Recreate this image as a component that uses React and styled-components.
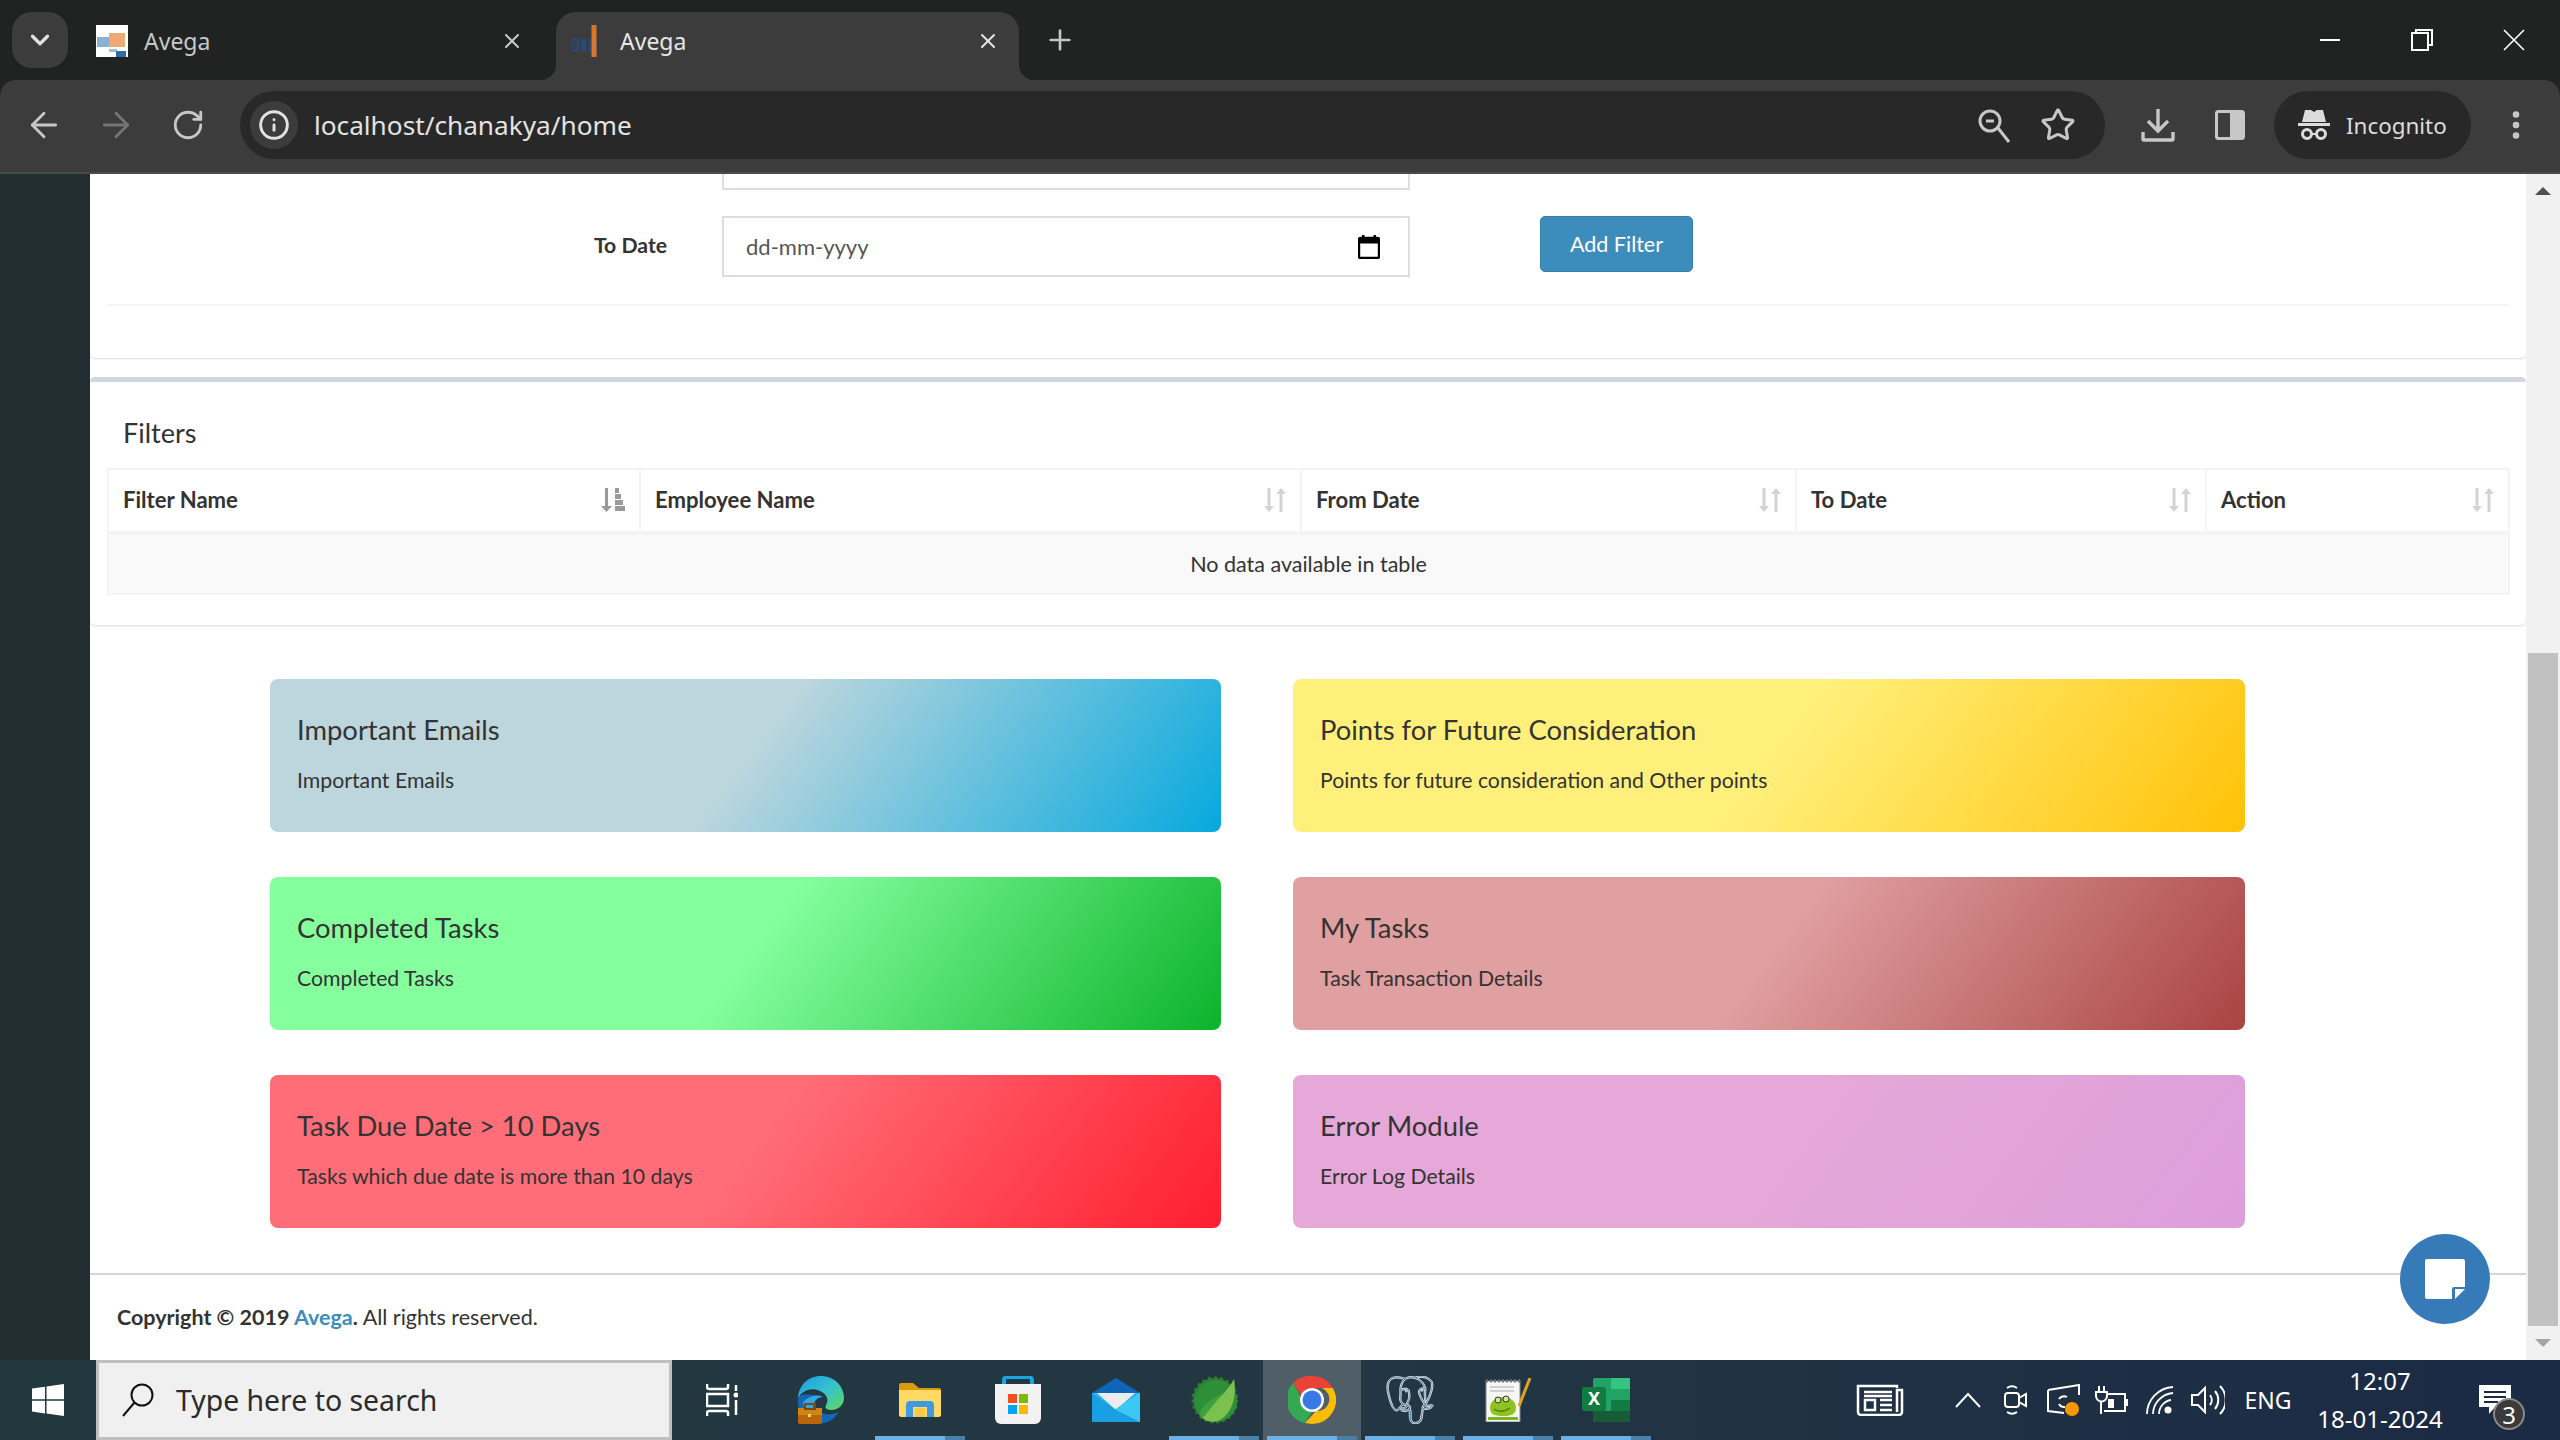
import React from "react";
import styled, { createGlobalStyle } from "styled-components";
import { ArrowLeft, ArrowRight, RotateCw, Info, Star, ChevronDown, Plus, X, EllipsisVertical } from "lucide-react";
import { SiPostgresql } from "react-icons/si";

const GlobalStyle = createGlobalStyle`
  html, body {
    margin: 0;
    width: 2560px;
    height: 1440px;
    overflow: hidden;
    background: #fff;
    font-family: "Lato", "Noto Sans", sans-serif;
    color: #333;
  }
  * { box-sizing: border-box; }
`;

const Screen = styled.div`
  display: flex;
  flex-direction: column;
  width: 2560px;
  height: 1440px;
`;

/* browser chrome */
const BrowserTop = styled.div`
  background: #202322;
  font-family: "Noto Sans", sans-serif;
`;

const TabStrip = styled.div`
  display: flex;
  align-items: flex-start;
  height: 80px;
  padding-top: 12px;
`;

const TabSearch = styled.button`
  display: flex;
  align-items: center;
  justify-content: center;
  width: 56px;
  height: 56px;
  margin: 0 12px;
  padding: 0;
  border: 0;
  border-radius: 20px;
  background: #3c3c3c;
  color: #e3e3e3;
`;

const Tab = styled.div`
  position: relative;
  display: flex;
  align-items: center;
  gap: 16px;
  width: 463px;
  height: 68px;
  margin-right: ${(p) => (p.$active ? 0 : 13)}px;
  padding: 0 19px 11px 16px;
  border-radius: 20px 20px 0 0;
  background: ${(p) => (p.$active ? "#3c3c3c" : "transparent")};
  color: ${(p) => (p.$active ? "#e6e6e6" : "#c7c7c7")};
  font-size: 23px;

  ${(p) =>
    p.$active &&
    `
    &::before, &::after {
      content: "";
      position: absolute;
      bottom: 0;
      width: 16px;
      height: 16px;
    }
    &::before { left: -16px; background: radial-gradient(circle at 0 0, transparent 16px, #3c3c3c 16.5px); }
    &::after { right: -16px; background: radial-gradient(circle at 100% 0, transparent 16px, #3c3c3c 16.5px); }
  `}
`;

const TabTitle = styled.span`
  flex: 1;
  line-height: 32px;
`;

const NewTab = styled.div`
  display: flex;
  align-items: center;
  justify-content: center;
  width: 56px;
  height: 56px;
  margin-left: 13px;
  color: #c7c7c7;
`;

const WindowControls = styled.div`
  display: flex;
  margin: -12px 0 0 auto;
`;

const WindowButton = styled.div`
  display: flex;
  align-items: center;
  justify-content: center;
  width: 92px;
  height: 80px;
`;

const Toolbar = styled.div`
  display: flex;
  align-items: center;
  height: 94px;
  padding: 0 0 2px 8px;
  border-bottom: 2px solid #4a4a4a;
  border-radius: 16px 16px 0 0;
  background: #3c3c3c;
`;

const ToolSlot = styled.div`
  display: flex;
  flex: none;
  align-items: center;
  justify-content: center;
  width: ${(p) => p.$w || 72}px;
  height: 68px;
  color: ${(p) => p.$color || "#c7c7c7"};
`;

const Omnibox = styled.div`
  display: flex;
  align-items: center;
  width: 1865px;
  height: 68px;
  margin: 0 17px 0 16px;
  padding: 0 15px 0 10px;
  border-radius: 34px;
  background: #282828;
`;

const SiteChip = styled.div`
  display: flex;
  align-items: center;
  justify-content: center;
  width: 48px;
  height: 48px;
  margin-right: 16px;
  border-radius: 50%;
  background: #3c3c3c;
  color: #e3e3e3;
`;

const UrlText = styled.span`
  flex: 1;
  color: #e3e3e3;
  font-size: 26.2px;
`;

const IncognitoChip = styled.div`
  display: flex;
  align-items: center;
  gap: 16px;
  width: 197px;
  height: 68px;
  margin: 0 9px 0 8px;
  padding-left: 24px;
  border-radius: 34px;
  background: #282828;
  color: #dcdcdc;
  font-size: 22.4px;
`;

/* page */
const Viewport = styled.div`
  position: relative;
  display: flex;
  flex: 1;
  min-height: 0;
`;

const Sidebar = styled.div`
  flex: none;
  width: 90px;
  background: #222d32;
`;

const Content = styled.div`
  display: flex;
  flex: 1;
  flex-direction: column;
  min-width: 0;
  background: #fff;
`;

const FilterBox = styled.div`
  padding-bottom: 52px;
  border-radius: 0 0 5px 5px;
  box-shadow: 0 1px 2px rgba(0, 0, 0, 0.14);
`;

const ClippedField = styled.div`
  width: 688px;
  height: 16px;
  margin-left: 632px;
  border: 2px solid #dadde4;
  border-top: 0;
`;

const FormRow = styled.div`
  display: flex;
  align-items: flex-start;
  margin-top: 26px;
`;

const FieldLabel = styled.label`
  width: 577px;
  margin-right: 55px;
  font-size: 21.2px;
  font-weight: 700;
  line-height: 58px;
  text-align: right;
`;

const DateField = styled.div`
  display: flex;
  align-items: center;
  justify-content: space-between;
  width: 688px;
  height: 61px;
  padding: 0 28px 0 22px;
  border: 2px solid #dadde4;
  color: #555;
  font-size: 22px;
`;

const AddButton = styled.button`
  width: 153px;
  height: 56px;
  margin-left: 130px;
  border: 1px solid #367fa9;
  border-radius: 5px;
  background: #3c8dbc;
  color: #fff;
  font-family: inherit;
  font-size: 21.5px;
`;

const Divider = styled.div`
  height: 2px;
  margin: 27px 17px 0 18px;
  background: #f4f4f4;
`;

const FiltersBox = styled.div`
  margin-top: 19px;
  padding-bottom: 30px;
  border-top: 5px solid #d2d6de;
  border-radius: 5px;
  box-shadow: 0 1px 2px rgba(0, 0, 0, 0.14);
`;

const BoxTitle = styled.h3`
  margin: 0;
  padding: 33px 0 17px 33px;
  font-size: 27px;
  font-weight: 400;
  line-height: 36px;
`;

const TableWrap = styled.div`
  margin: 0 18px 0 17px;
`;

const Table = styled.table`
  width: 100%;
  border-collapse: collapse;
  table-layout: fixed;
`;

const HeadCell = styled.th`
  width: ${(p) => p.$w}px;
  height: 64px;
  padding: 0 14px 2px 14px;
  border: 2px solid #f4f4f4;
  border-bottom-width: 4px;
  font-size: 22.1px;
  font-weight: 700;
  text-align: left;
`;

const HeadInner = styled.div`
  display: flex;
  align-items: center;
  justify-content: space-between;
`;

const EmptyCell = styled.td`
  height: 61px;
  border: 2px solid #f4f4f4;
  background: #f9f9f9;
  font-size: 21.5px;
  text-align: center;
`;

const CardGrid = styled.div`
  display: grid;
  grid-template-columns: 951px 952px;
  gap: 45px 72px;
  margin: 54px 0 0 180px;
`;

const Card = styled.div`
  height: 153px;
  padding: 31px 27px 0;
  border-radius: 8px;
  background: linear-gradient(127deg, ${(p) => p.$from} 50%, ${(p) => p.$to} 100%);
`;

const CardTitle = styled.div`
  font-size: 27.4px;
  line-height: 40px;
`;

const CardText = styled.div`
  margin-top: 15px;
  font-size: 21.25px;
  line-height: 30px;
`;

const Footer = styled.footer`
  flex: 1;
  margin-top: 45px;
  padding: 26px 0 0 27px;
  border-top: 2px solid #d2d6de;
  font-size: 21.5px;
  line-height: 32px;
`;

const FooterLink = styled.span`
  color: #3c8dbc;
`;

const Scrollbar = styled.div`
  display: flex;
  flex: none;
  flex-direction: column;
  width: 34px;
  background: #f1f1f1;
`;

const ScrollArrow = styled.div`
  display: flex;
  flex: none;
  align-items: center;
  justify-content: center;
  height: 34px;
  &::after {
    content: "";
    border-left: 8px solid transparent;
    border-right: 8px solid transparent;
    ${(p) => (p.$down ? "border-top: 8px solid #a3a3a3;" : "border-bottom: 8px solid #505050;")}
  }
`;

const ScrollThumb = styled.div`
  flex: none;
  height: 673px;
  margin: auto 2px 0;
  background: #c1c1c1;
`;

const NoteButton = styled.div`
  position: absolute;
  right: 70px;
  bottom: 36px;
  display: flex;
  align-items: center;
  justify-content: center;
  width: 90px;
  height: 90px;
  border-radius: 50%;
  background: #367ab8;
`;

/* taskbar */
const Taskbar = styled.div`
  display: flex;
  flex: none;
  align-items: stretch;
  height: 80px;
  background: linear-gradient(90deg, #21383f 0%, #233743 50%, #1b2a45 100%);
  color: #fff;
  font-family: "Noto Sans", sans-serif;
`;

const StartButton = styled.div`
  display: flex;
  flex: none;
  align-items: center;
  justify-content: center;
  width: 96px;
`;

const SearchBox = styled.div`
  display: flex;
  flex: none;
  align-items: center;
  gap: 21px;
  width: 576px;
  padding-left: 22px;
  border: 3px solid #c0c0c0;
  background: #f0f0f0;
  color: #2b2b2b;
  font-size: 28.4px;
`;

const AppSlot = styled.div`
  position: relative;
  display: flex;
  flex: none;
  align-items: center;
  justify-content: center;
  width: ${(p) => p.$w || 98}px;
  background: ${(p) => (p.$current ? "#4f5e67" : "transparent")};

  ${(p) =>
    p.$open &&
    `
    &::after {
      content: "";
      position: absolute;
      left: 4px;
      right: 4px;
      bottom: 0;
      height: 4px;
      background: linear-gradient(90deg, #6cb1e6 78%, #4a7fa8 78%);
    }
  `}
`;

const Tray = styled.div`
  display: flex;
  align-items: center;
  margin-left: auto;
`;

const TraySlot = styled.div`
  display: flex;
  flex: none;
  align-items: center;
  justify-content: center;
  width: ${(p) => p.$w || 48}px;
  height: 80px;
  font-size: 23px;
`;

const Clock = styled.div`
  width: 152px;
  font-size: 24px;
  line-height: 38px;
  text-align: center;
`;

const NoticeSlot = styled.div`
  position: relative;
  display: flex;
  align-items: center;
  width: 104px;
  height: 80px;
  padding-left: 23px;
`;

const NoticeBadge = styled.span`
  position: absolute;
  left: 37px;
  top: 38px;
  display: flex;
  align-items: center;
  justify-content: center;
  width: 32px;
  height: 32px;
  border: 2px solid #8a8a8a;
  border-radius: 50%;
  background: #3a3a3a;
  font-size: 24px;
`;

/* drawings */
const FaviconOne = () => (
  <svg width="32" height="32" viewBox="0 0 32 32">
    <rect width="32" height="32" fill="#fff" />
    <rect x="1" y="12" width="12" height="10" fill="#6f9bcb" opacity="0.8" />
    <rect x="13" y="8" width="16" height="14" fill="#f0a875" />
    <rect x="13" y="24" width="8" height="3" fill="#9bbcdb" />
    <rect x="20" y="26" width="10" height="6" fill="#2f6da8" />
  </svg>
);

const FaviconTwo = () => (
  <svg width="32" height="32" viewBox="0 0 32 32">
    <rect x="0" y="14" width="6" height="12" rx="3" fill="none" stroke="#274a86" strokeWidth="2" />
    <rect x="9" y="14" width="5" height="12" fill="#274a86" />
    <rect x="18" y="14" width="6" height="12" fill="none" stroke="#274a86" strokeWidth="2" />
    <path d="M22 0v32" stroke="#d9762b" strokeWidth="5" />
  </svg>
);

const ZoomOutIcon = () => (
  <svg width="36" height="36" viewBox="0 0 36 36" fill="none" stroke="currentColor" strokeWidth="3">
    <circle cx="14" cy="14" r="10" />
    <path d="M22 21l11 14" />
    <path d="M10 14h8" />
  </svg>
);

const DownloadIcon = () => (
  <svg width="34" height="34" viewBox="0 0 34 34" fill="none" stroke="currentColor" strokeWidth="3.4">
    <path d="M17 1v21M7 13l10 10 10-10" />
    <path d="M2 24v7a1 1 0 0 0 1 1h28a1 1 0 0 0 1-1v-7" />
  </svg>
);

const SidePanelIcon = () => (
  <svg width="30" height="30" viewBox="0 0 30 30">
    <rect x="1.5" y="1.5" width="27" height="27" rx="2" fill="none" stroke="currentColor" strokeWidth="3" />
    <rect x="15" y="1.5" width="13" height="27" fill="currentColor" />
  </svg>
);

const IncognitoIcon = () => (
  <svg width="32" height="30" viewBox="0 0 32 30" fill="currentColor">
    <path d="M7 0h6l3 2 3-2h6l3 12H4z" />
    <rect x="0" y="13" width="32" height="3" />
    <circle cx="9" cy="24" r="4.5" fill="none" stroke="currentColor" strokeWidth="3" />
    <circle cx="23" cy="24" r="4.5" fill="none" stroke="currentColor" strokeWidth="3" />
    <rect x="13" y="23" width="6" height="2" />
  </svg>
);

const CalendarIcon = () => (
  <svg width="22" height="24" viewBox="0 0 22 24">
    <rect x="4" y="0" width="2.5" height="4" fill="#000" />
    <rect x="15.500" y="0" width="2.500" height="4" fill="#000" />
    <rect x="1" y="3" width="20" height="20" rx="1.500" fill="none" stroke="#000" strokeWidth="2.400" />
    <rect x="1" y="3" width="20" height="5.500" fill="#000" />
  </svg>
);

const SortIcon = () => (
  <svg width="22" height="24" viewBox="0 0 22 24" fill="#d3d3d3">
    <path d="M3.500 0h3v18h3.500l-5 6-5-6h3.500z" />
    <path d="M15.500 24h3V6H22l-5-6-5 6h3.500z" />
  </svg>
);

const SortAscIcon = () => (
  <svg width="24" height="24" viewBox="0 0 24 24" fill="#9a9a9a">
    <path d="M4 0h3v18h4l-5.500 6L0 18h4z" />
    <rect x="14" y="0" width="4" height="5" />
    <rect x="14" y="6" width="6" height="5" />
    <rect x="14" y="12" width="8" height="5" />
    <rect x="14" y="18" width="10" height="5" />
  </svg>
);

const NoteIcon = () => (
  <svg width="40" height="40" viewBox="0 0 40 40">
    <path d="M2 0h36a2 2 0 0 1 2 2v26H29a2 2 0 0 0-2 2v10H2a2 2 0 0 1-2-2V2a2 2 0 0 1 2-2z" fill="#fff" />
    <path d="M30 30h10L30 40z" fill="#fff" />
  </svg>
);

const WindowsLogo = () => (
  <svg width="32" height="32" viewBox="0 0 32 32" fill="#fff">
    <path d="M0 4.500l13-1.800v12.600H0zM14.500 2.500L32 0v15.300H14.500zM0 16.800h13v12.600L0 27.500zM14.500 16.800H32V32l-17.500-2.500z" />
  </svg>
);

const SearchGlass = () => (
  <svg width="34" height="34" viewBox="0 0 34 34" fill="none" stroke="#111" strokeWidth="2">
    <circle cx="21" cy="12" r="10.500" />
    <path d="M13.500 19.500L2 33" />
  </svg>
);

const TaskViewIcon = () => (
  <svg width="32" height="32" viewBox="0 0 32 32" fill="none" stroke="#fff" strokeWidth="2.500">
    <path d="M1 0v3a2 2 0 0 0 2 2h17a2 2 0 0 0 2-2V0" />
    <rect x="1" y="10" width="21" height="12" />
    <path d="M1 32v-3a2 2 0 0 1 2-2h17a2 2 0 0 1 2 2v3" />
    <path d="M30 1v6M30 16v15" />
    <circle cx="30" cy="11" r="2.500" fill="#fff" stroke="none" />
  </svg>
);

const EdgeIcon = () => (
  <svg width="48" height="48" viewBox="0 0 48 48">
    <defs>
      <linearGradient id="edgeTop" x1="0" y1="0" x2="1" y2="1">
        <stop offset="0" stopColor="#1b9de2" />
        <stop offset="0.5" stopColor="#35c1d0" />
        <stop offset="1" stopColor="#5fd85d" />
      </linearGradient>
    </defs>
    <path d="M24 0C10 0 2 10 1 22c5-8 14-11 22-7 7 3 9 9 6 14-2 4 2 5 6 5 6 0 12-5 12-12C47 10 37 0 24 0z" fill="url(#edgeTop)" />
    <path d="M1 22c-1 8 2 16 9 21 8 6 20 6 27-1 3-3 4-5 4-6-5 3-14 4-20-2-4-4-4-10 0-14-8-2-16-3-20 2z" fill="#1468b3" />
    <path d="M6 26c6-6 14-8 20-5-5 0-10 4-10 10 0 3 0 5 1 7-6-2-11-6-11-12z" fill="#35a6e4" />
    <rect x="1" y="32" width="24" height="16" rx="2" fill="#b8660c" />
    <rect x="1" y="32" width="24" height="7" fill="#cf8413" />
    <rect x="8" y="28" width="10" height="5" fill="none" stroke="#7a4a0a" strokeWidth="2" />
    <rect x="11" y="38" width="3" height="3" fill="#ffd24a" />
  </svg>
);

const FolderIcon = () => (
  <svg width="42" height="34" viewBox="0 0 42 34">
    <path d="M0 2a2 2 0 0 1 2-2h12l6 5h20a2 2 0 0 1 2 2v3H0z" fill="#d99a0c" />
    <path d="M0 7h42v25a2 2 0 0 1-2 2H2a2 2 0 0 1-2-2z" fill="#ffd966" />
    <path d="M7 34V22a4 4 0 0 1 4-4h20a4 4 0 0 1 4 4v12h-7v-10H14v10z" fill="#3f9be0" />
    <rect x="16" y="25" width="10" height="9" fill="#f7c948" />
  </svg>
);

const StoreIcon = () => (
  <svg width="46" height="48" viewBox="0 0 46 48">
    <path d="M9 10V4a3 3 0 0 1 3-3h22a3 3 0 0 1 3 3v6" fill="none" stroke="#19a6e0" strokeWidth="4" />
    <path d="M0 8h46v34a6 6 0 0 1-6 6H6a6 6 0 0 1-6-6z" fill="#f2f2f2" />
    <rect x="13" y="18" width="9" height="9" fill="#f25022" />
    <rect x="24" y="18" width="9" height="9" fill="#7fba00" />
    <rect x="13" y="29" width="9" height="9" fill="#00a4ef" />
    <rect x="24" y="29" width="9" height="9" fill="#ffb900" />
  </svg>
);

const MailIcon = () => (
  <svg width="48" height="44" viewBox="0 0 48 44">
    <path d="M0 15L24 0l24 15v4H0z" fill="#0f66b8" />
    <path d="M0 15h48v29H0z" fill="#2fb4ee" />
    <path d="M5 15h38L24 32z" fill="#ececec" />
    <path d="M48 15v29H24l-2-12z" fill="#3cc8f5" />
    <path d="M0 15v29h48L24 32z" fill="#1a9fe3" />
  </svg>
);

const SpringIcon = () => (
  <svg width="48" height="48" viewBox="0 0 48 48">
    <circle cx="25" cy="24" r="22" fill="#2e7d32" stroke="#2e7d32" strokeWidth="3" strokeDasharray="3 3" />
    <circle cx="26" cy="25" r="21" fill="#2f8f38" />
    <path d="M44 3c3 18-2 34-14 41-6 3-14 2-19-3 4-2 8-10 14-16 6-5 14-12 19-22z" fill="#7cc04f" />
    <path d="M9 38c4-10 14-16 26-22-8 8-14 16-22 26z" fill="#3fa13b" />
  </svg>
);

const ChromeIcon = () => (
  <svg width="48" height="48" viewBox="0 0 48 48">
    <path d="M24 0a24 24 0 0 1 20.800 12H24a12 12 0 0 0-11 7L5 7A24 24 0 0 1 24 0z" fill="#ea4335" />
    <path d="M5 7l8 14a12 12 0 0 0 11 15l-7 11A24 24 0 0 1 5 7z" fill="#34a853" />
    <path d="M44.800 12A24 24 0 0 1 24 48l-7-1 11-12a12 12 0 0 0 6-23z" fill="#fbbc04" />
    <circle cx="24" cy="24" r="12" fill="#fff" />
    <circle cx="24" cy="24" r="9.500" fill="#3b78e7" />
  </svg>
);

const NotepadIcon = () => (
  <svg width="46" height="44" viewBox="0 0 46 44">
    <rect x="1" y="3" width="34" height="41" fill="#f6f6f6" stroke="#888" strokeWidth="1" />
    <path d="M1 3h34" stroke="#777" strokeWidth="3" strokeDasharray="2 2" />
    <path d="M5 9h24M5 13h24" stroke="#aaa" strokeWidth="1.200" />
    <path d="M5 30c0-7 6-11 13-11s13 4 13 11-6 8-13 8-13-1-13-8z" fill="#8fc31f" />
    <circle cx="13" cy="22" r="3" fill="#d8e88a" stroke="#333" strokeWidth="1" />
    <circle cx="21" cy="21" r="3" fill="#d8e88a" stroke="#333" strokeWidth="1" />
    <path d="M9 31c4 3 10 3 16-1" stroke="#4f7a12" strokeWidth="1.500" fill="none" />
    <rect x="3" y="39" width="30" height="3" fill="#7ab51d" />
    <path d="M45 0L34 28" stroke="#e2a41d" strokeWidth="3" />
  </svg>
);

const ExcelIcon = () => (
  <svg width="48" height="44" viewBox="0 0 48 44">
    <path d="M11 2a2 2 0 0 1 2-2h33a2 2 0 0 1 2 2v40a2 2 0 0 1-2 2H13a2 2 0 0 1-2-2z" fill="#21a366" />
    <rect x="29" y="0" width="19" height="11" fill="#33c481" />
    <rect x="29" y="22" width="19" height="11" fill="#107c41" />
    <path d="M11 33h37v9a2 2 0 0 1-2 2H13a2 2 0 0 1-2-2z" fill="#185c37" />
    <rect x="0" y="9" width="24" height="24" rx="2" fill="#107c41" />
    <text x="12" y="27" textAnchor="middle" fill="#fff" fontSize="18" fontWeight="700" fontFamily="Noto Sans, sans-serif">X</text>
  </svg>
);

const NewsIcon = () => (
  <svg width="48" height="32" viewBox="0 0 48 32" fill="none" stroke="#fff" strokeWidth="2.500">
    <path d="M41 4V2H2v26a3 3 0 0 0 3 3h38a3 3 0 0 0 3-3V6h-5v22" />
    <path d="M8 8h28M8 12h28" />
    <rect x="9" y="16" width="10" height="10" />
    <path d="M24 16h12M24 21h12M24 26h12" />
  </svg>
);

const ChevronIcon = () => (
  <svg width="28" height="16" viewBox="0 0 28 16" fill="none" stroke="#fff" strokeWidth="2">
    <path d="M2 15L14 2l12 13" />
  </svg>
);

const CameraIcon = () => (
  <svg width="24" height="30" viewBox="0 0 24 30" fill="none" stroke="#fff" strokeWidth="2">
    <rect x="1" y="8" width="14" height="14" rx="3" />
    <path d="M15 13l7-4v12l-7-4z" />
    <path d="M3 3c3-2 7-2 10 0M3 27c3 2 7 2 10 0" />
  </svg>
);

const SyncIcon = () => (
  <svg width="34" height="32" viewBox="0 0 34 32" fill="none" stroke="#fff" strokeWidth="2">
    <path d="M1 6L32 1v10M1 6v21l16 2" />
    <path d="M20 13a6 6 0 0 0-8 2M12 20a6 6 0 0 0 6 3" />
    <circle cx="25" cy="25" r="7" fill="#ff9800" stroke="none" />
  </svg>
);

const BatteryIcon = () => (
  <svg width="34" height="28" viewBox="0 0 34 28" fill="none" stroke="#fff" strokeWidth="2">
    <path d="M4 0v6M9 0v6M1 6h11v4a5 5 0 0 1-11 0zM6 15v13" />
    <path d="M12 8h18v17H9" />
    <rect x="30" y="13" width="3" height="7" fill="#fff" stroke="none" />
    <rect x="13" y="13" width="6" height="9" fill="#fff" stroke="none" />
  </svg>
);

const WifiIcon = () => (
  <svg width="28" height="28" viewBox="0 0 28 28" fill="none" stroke="#fff" strokeWidth="1.800">
    <path d="M1 28C1 14 12 2 27 1M7 28C7 18 15 8 27 7M13 28c0-7 5-13 12-14" />
    <circle cx="22" cy="24" r="3.500" fill="#fff" stroke="none" />
  </svg>
);

const SpeakerIcon = () => (
  <svg width="34" height="30" viewBox="0 0 34 30" fill="none" stroke="#fff" strokeWidth="2">
    <path d="M1 10h6l7-7v24l-7-7H1z" />
    <path d="M19 10a8 8 0 0 1 0 10M24 6a14 14 0 0 1 0 18M29 1a20 20 0 0 1 0 28" />
  </svg>
);

const NoticeIcon = () => (
  <svg width="32" height="30" viewBox="0 0 32 30">
    <path d="M0 0h32v22H16l-6 7v-7H0z" fill="#fff" />
    <path d="M5 7h22M5 12h22M5 17h14" stroke="#1b2a45" strokeWidth="2" />
  </svg>
);

const WindowClose = () => (
  <svg width="22" height="22" viewBox="0 0 22 22" stroke="#fff" strokeWidth="1.600">
    <path d="M1 1l20 20M21 1L1 21" />
  </svg>
);

const WindowRestore = () => (
  <svg width="22" height="22" viewBox="0 0 22 22" fill="none" stroke="#fff" strokeWidth="2">
    <path d="M5 4V1h16v15h-3" />
    <rect x="1" y="4" width="16" height="17" />
  </svg>
);

const WindowMin = () => (
  <svg width="20" height="4" viewBox="0 0 20 4">
    <rect y="1" width="20" height="2" fill="#fff" />
  </svg>
);

const cards = [
  { title: "Important Emails", text: "Important Emails", from: "#bdd6dd", to: "#06a9de" },
  { title: "Points for Future Consideration", text: "Points for future consideration and Other points", from: "#fff07c", to: "#ffc107" },
  { title: "Completed Tasks", text: "Completed Tasks", from: "#85ff9e", to: "#0cb32c" },
  { title: "My Tasks", text: "Task Transaction Details", from: "#e09fa1", to: "#a94442" },
  { title: "Task Due Date > 10 Days", text: "Tasks which due date is more than 10 days", from: "#ff6e78", to: "#ff1e2f" },
  { title: "Error Module", text: "Error Log Details", from: "#e5a8d8", to: "#dd9edb" },
];

const columns = [
  { name: "Filter Name", width: 532, sorted: true },
  { name: "Employee Name", width: 661 },
  { name: "From Date", width: 495 },
  { name: "To Date", width: 410 },
  { name: "Action", width: 303 },
];

const App = () => {
  return (
    <Screen>
      <GlobalStyle />
      <BrowserTop>
        <TabStrip>
          <TabSearch>
            <ChevronDown size={30} strokeWidth={2.6} />
          </TabSearch>
          <Tab>
            <FaviconOne />
            <TabTitle>Avega</TabTitle>
            <X size={24} strokeWidth={2} />
          </Tab>
          <Tab $active>
            <FaviconTwo />
            <TabTitle>Avega</TabTitle>
            <X size={24} strokeWidth={2} />
          </Tab>
          <NewTab>
            <Plus size={32} strokeWidth={2} />
          </NewTab>
          <WindowControls>
            <WindowButton>
              <WindowMin />
            </WindowButton>
            <WindowButton>
              <WindowRestore />
            </WindowButton>
            <WindowButton>
              <WindowClose />
            </WindowButton>
          </WindowControls>
        </TabStrip>
        <Toolbar>
          <ToolSlot>
            <ArrowLeft size={40} strokeWidth={1.7} />
          </ToolSlot>
          <ToolSlot $color="#757575">
            <ArrowRight size={40} strokeWidth={1.7} />
          </ToolSlot>
          <ToolSlot>
            <RotateCw size={34} strokeWidth={2} />
          </ToolSlot>
          <Omnibox>
            <SiteChip>
              <Info size={32} strokeWidth={2.2} />
            </SiteChip>
            <UrlText>localhost/chanakya/home</UrlText>
            <ToolSlot $w={64}>
              <ZoomOutIcon />
            </ToolSlot>
            <ToolSlot $w={64}>
              <Star size={36} strokeWidth={2} />
            </ToolSlot>
          </Omnibox>
          <ToolSlot>
            <DownloadIcon />
          </ToolSlot>
          <ToolSlot>
            <SidePanelIcon />
          </ToolSlot>
          <IncognitoChip>
            <IncognitoIcon />
            Incognito
          </IncognitoChip>
          <ToolSlot>
            <EllipsisVertical size={36} strokeWidth={2.4} />
          </ToolSlot>
        </Toolbar>
      </BrowserTop>

      <Viewport>
        <Sidebar />
        <Content>
          <FilterBox>
            <ClippedField />
            <FormRow>
              <FieldLabel>To Date</FieldLabel>
              <DateField>
                dd-mm-yyyy
                <CalendarIcon />
              </DateField>
              <AddButton>Add Filter</AddButton>
            </FormRow>
            <Divider />
          </FilterBox>

          <FiltersBox>
            <BoxTitle>Filters</BoxTitle>
            <TableWrap>
              <Table>
                <thead>
                  <tr>
                    {columns.map((col) => (
                      <HeadCell key={col.name} $w={col.width}>
                        <HeadInner>
                          {col.name}
                          {col.sorted ? <SortAscIcon /> : <SortIcon />}
                        </HeadInner>
                      </HeadCell>
                    ))}
                  </tr>
                </thead>
                <tbody>
                  <tr>
                    <EmptyCell colSpan={5}>No data available in table</EmptyCell>
                  </tr>
                </tbody>
              </Table>
            </TableWrap>
          </FiltersBox>

          <CardGrid>
            {cards.map((card) => (
              <Card key={card.title} $from={card.from} $to={card.to}>
                <CardTitle>{card.title}</CardTitle>
                <CardText>{card.text}</CardText>
              </Card>
            ))}
          </CardGrid>

          <Footer>
            <strong>
              Copyright © 2019 <FooterLink>Avega</FooterLink>.
            </strong>{" "}
            All rights reserved.
          </Footer>
        </Content>
        <Scrollbar>
          <ScrollArrow />
          <ScrollThumb />
          <ScrollArrow $down />
        </Scrollbar>
        <NoteButton>
          <NoteIcon />
        </NoteButton>
      </Viewport>

      <Taskbar>
        <StartButton>
          <WindowsLogo />
        </StartButton>
        <SearchBox>
          <SearchGlass />
          Type here to search
        </SearchBox>
        <AppSlot $w={99}>
          <TaskViewIcon />
        </AppSlot>
        <AppSlot $w={100}>
          <EdgeIcon />
        </AppSlot>
        <AppSlot $open>
          <FolderIcon />
        </AppSlot>
        <AppSlot>
          <StoreIcon />
        </AppSlot>
        <AppSlot>
          <MailIcon />
        </AppSlot>
        <AppSlot $open>
          <SpringIcon />
        </AppSlot>
        <AppSlot $open $current>
          <ChromeIcon />
        </AppSlot>
        <AppSlot $open>
          <SiPostgresql size={48} color="#3a6f9e" stroke="#fff" strokeWidth={0.4} />
        </AppSlot>
        <AppSlot $open>
          <NotepadIcon />
        </AppSlot>
        <AppSlot $open>
          <ExcelIcon />
        </AppSlot>
        <Tray>
          <TraySlot $w={88}>
            <NewsIcon />
          </TraySlot>
          <TraySlot $w={20} />
          <TraySlot>
            <ChevronIcon />
          </TraySlot>
          <TraySlot>
            <CameraIcon />
          </TraySlot>
          <TraySlot>
            <SyncIcon />
          </TraySlot>
          <TraySlot>
            <BatteryIcon />
          </TraySlot>
          <TraySlot>
            <WifiIcon />
          </TraySlot>
          <TraySlot>
            <SpeakerIcon />
          </TraySlot>
          <TraySlot $w={72}>ENG</TraySlot>
          <Clock>
            <div>12:07</div>
            <div>18-01-2024</div>
          </Clock>
          <NoticeSlot>
            <NoticeIcon />
            <NoticeBadge>3</NoticeBadge>
          </NoticeSlot>
        </Tray>
      </Taskbar>
    </Screen>
  );
};

export default App;
